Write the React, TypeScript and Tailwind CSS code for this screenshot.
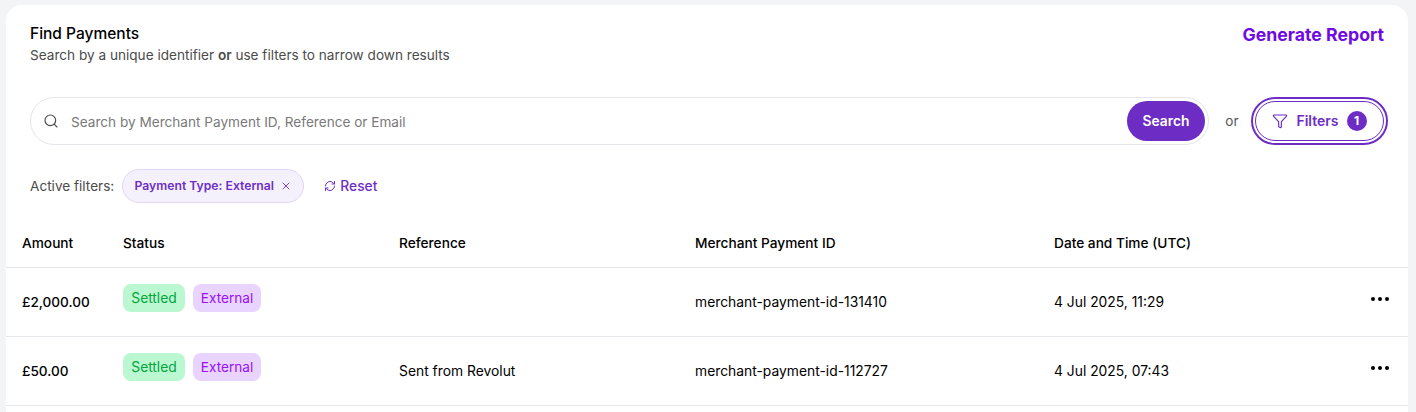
import { Search, Funnel, RefreshCw, X } from 'lucide-react';

const rows = [
  { amount: '£2,000.00', reference: '', merchantId: 'merchant-payment-id-131410', date: '4 Jul 2025, 11:29' },
  { amount: '£50.00', reference: 'Sent from Revolut', merchantId: 'merchant-payment-id-112727', date: '4 Jul 2025, 07:43' },
];

const gridCols = 'grid grid-cols-[101px_276px_296px_359px_1fr_auto] pl-4 pr-[19px]';

function Dots() {
  return (
    <div className="flex gap-[3px]">
      <span className="w-1 h-1 rounded-full bg-black" />
      <span className="w-1 h-1 rounded-full bg-black" />
      <span className="w-1 h-1 rounded-full bg-black" />
    </div>
  );
}

export default function App() {
  return (
    <div className="h-[412px] overflow-hidden bg-[#f3f4f6] pt-[5px] px-[6px] pr-2 font-['Inter',sans-serif]">
      <div className="h-full bg-white rounded-t-2xl">
        <div className="flex justify-between items-start px-6 pt-[19px] pr-6">
          <div>
            <h2 className="text-[15.5px] leading-5 font-medium text-black">Find Payments</h2>
            <p className="mt-px text-[13.6px] leading-5 text-[#4b4b4b]">
              Search by a unique identifier <span className="font-semibold">or</span> use filters to narrow down results
            </p>
          </div>
          <button className="-mt-px text-[17.7px] leading-6 font-bold text-[#6f0ae0]">Generate Report</button>
        </div>

        <div className="flex items-center px-6 pr-5 mt-8">
          <div className="flex-1 h-12 flex items-center rounded-full border border-[#e5e5ea] pl-3 pr-[3px]">
            <Search className="w-4 h-4 text-[#4b4b4b]" strokeWidth={1.75} />
            <span className="ml-3 pt-0.5 flex-1 text-[13.6px] text-[#7a7a7a]">Search by Merchant Payment ID, Reference or Email</span>
            <button className="w-[78px] h-10 rounded-full bg-[#6d2dc4] text-white text-[13.8px] font-semibold">Search</button>
          </div>
          <span className="w-[42px] pl-1 text-center text-[13.6px] text-[#555]">or</span>
          <div className="w-[137px] h-12 rounded-full border-2 border-[#6d2dc4] p-[2px]">
            <button className="w-full h-full rounded-full border border-[#6d2dc4] flex items-center justify-center text-sm font-semibold text-[#6d2dc4]">
              <Funnel className="w-4 h-4" strokeWidth={1.75} />
              <span className="ml-2">Filters</span>
              <span className="ml-2 w-5 h-5 rounded-full bg-[#6d2dc4] text-white text-xs font-bold flex items-center justify-center">1</span>
            </button>
          </div>
        </div>

        <div className="flex items-center px-6 mt-6">
          <span className="text-[13.6px] text-[#4b4b4b]">Active filters:</span>
          <div className="ml-2 h-[34px] w-[182px] flex items-center justify-center rounded-full border border-[#e2d6f5] bg-[#f5f1fc] text-[12.2px] font-semibold text-[#6d2dc4]">
            Payment Type: External
            <X className="w-3 h-3 ml-1.5" strokeWidth={1.75} />
          </div>
          <button className="ml-5 flex items-center text-[13.8px] font-medium text-[#6d2dc4]">
            <RefreshCw className="w-3 h-3 mr-1" strokeWidth={2} />
            Reset
          </button>
        </div>

        <div className={`${gridCols} h-[65px] pt-4 items-center text-[13.7px] font-medium text-black border-b border-[#e5e7eb]`}>
          <span>Amount</span>
          <span>Status</span>
          <span>Reference</span>
          <span>Merchant Payment ID</span>
          <span>Date and Time (UTC)</span>
          <span />
        </div>

        {rows.map((row) => (
          <div key={row.merchantId} className={`${gridCols} h-[69px] pt-px items-center text-[13.85px] text-black border-b border-[#e5e7eb]`}>
            <span className="text-[13.6px] font-medium">{row.amount}</span>
            <div className="flex gap-2 self-start pt-[15px]">
              <span className="w-[62px] h-7 flex items-center justify-center rounded-lg bg-[#bbf7d0] text-[#00a63e] text-[13.8px]">Settled</span>
              <span className="w-[68px] h-7 flex items-center justify-center rounded-lg bg-[#e9d4ff] text-[#9810fa] text-[13.6px]">External</span>
            </div>
            <span>{row.reference}</span>
            <span>{row.merchantId}</span>
            <span>{row.date}</span>
            <div className="self-start pt-7">
              <Dots />
            </div>
          </div>
        ))}
      </div>
    </div>
  );
}
